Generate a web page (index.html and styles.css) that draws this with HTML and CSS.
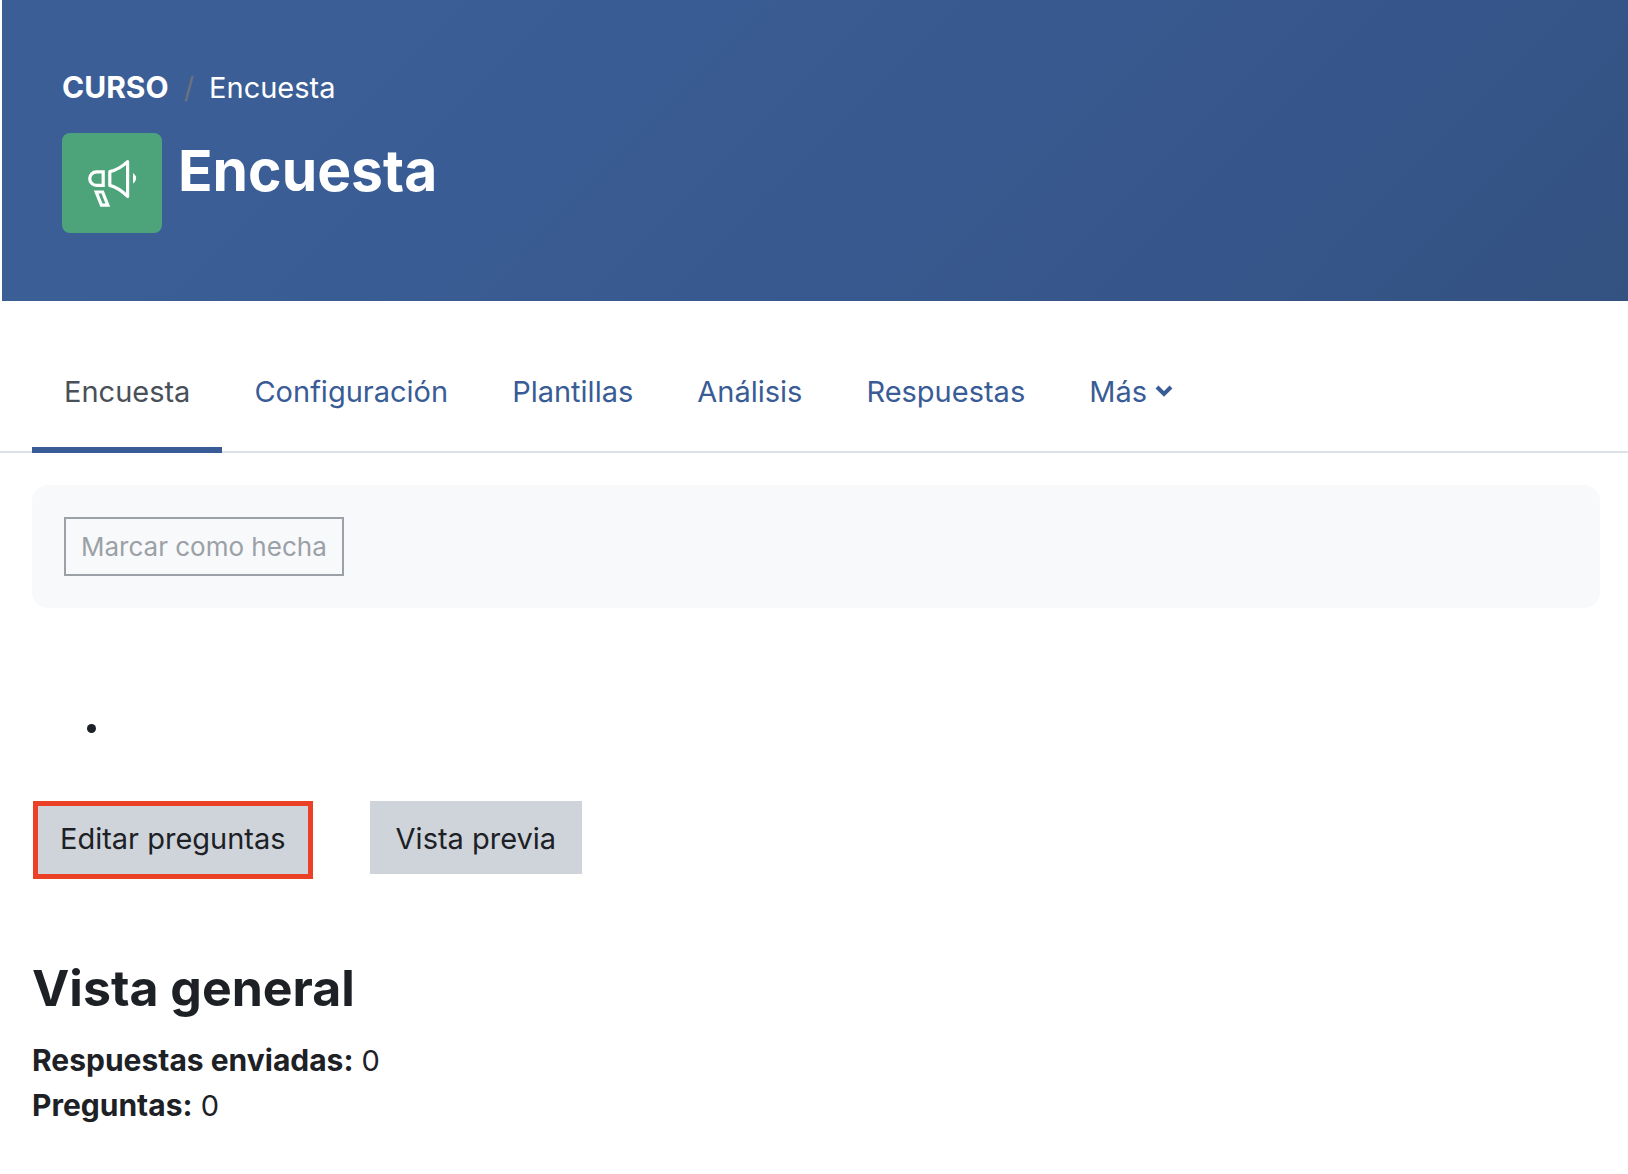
FILE: index.html
```html
<!DOCTYPE html>
<html lang="es">
<head>
<meta charset="utf-8">
<meta name="viewport" content="width=device-width, initial-scale=1">
<title>Encuesta</title>
<link rel="stylesheet" href="styles.css">
</head>
<body>
<header class="banner">
  <nav class="breadcrumb" aria-label="Ruta">
    <a class="crumb crumb-course" href="#">CURSO</a>
    <span class="crumb-divider">/</span>
    <a class="crumb" href="#">Encuesta</a>
  </nav>
  <div class="title-row">
    <span class="activity-icon">
      <svg viewBox="0 0 100 100" width="100" height="100" fill="none" stroke="#fff" stroke-width="3.200" aria-hidden="true">
        <path d="M41.200 38.800H34.500a6.800 6.800 0 0 0 0 13.600H41.200z"/>
        <path d="M47.800 38.600c7-1.600 12.500-5 17.800-10v34.800c-5.300-5-10.800-9.400-17.800-11z" stroke-linejoin="round"/>
        <path d="M34.200 59h6.400l5.200 13.200h-6.400z"/>
        <path d="M71 40q6.500 5.300 0 10.700z" fill="#fff" stroke="none"/>
      </svg>
    </span>
    <h1 class="title">Encuesta</h1>
  </div>
</header>

<nav class="tabs" aria-label="Encuesta">
  <a class="tab tab-active" href="#" aria-current="page">Encuesta</a>
  <a class="tab" href="#">Configuración</a>
  <a class="tab" href="#">Plantillas</a>
  <a class="tab" href="#">Análisis</a>
  <a class="tab" href="#">Respuestas</a>
  <a class="tab tab-more" href="#">Más
    <svg class="chevron" viewBox="0 0 18 14" width="18" height="14" fill="none" stroke="currentColor" stroke-width="4" aria-hidden="true"><path d="M2 3l7 7 7-7"/></svg>
  </a>
</nav>

<main class="content">
  <section class="completion">
    <button class="mark-done" type="button">Marcar como hecha</button>
  </section>
  <ul class="intro"><li></li></ul>
  <div class="actions">
    <button class="action action-marked" type="button">Editar preguntas</button>
    <button class="action" type="button">Vista previa</button>
  </div>
  <section>
    <h2 class="overview-title">Vista general</h2>
    <p class="stat"><strong>Respuestas enviadas:</strong> 0</p>
    <p class="stat"><strong>Preguntas:</strong> 0</p>
  </section>
</main>
</body>
</html>
```
FILE: styles.css
```css
* {
  box-sizing: border-box;
}

body {
  margin: 0;
  background: #fff;
  color: #1d2125;
  font: 29px/45px Inter, "Liberation Sans", sans-serif;
}

button {
  font: inherit;
  margin: 0;
}

a {
  color: inherit;
  text-decoration: none;
}

.banner {
  margin-left: 2px;
  padding: 65px 60px 68px;
  background: linear-gradient(135deg, #3b5e97 20%, #36568b 75%, #335281 100%);
  color: #fff;
}

.breadcrumb {
  display: flex;
  gap: 15px;
}

.crumb-course {
  font-size: 30px;
  font-weight: 700;
}

.crumb-divider {
  color: #6a737b;
}

.title-row {
  display: flex;
  gap: 16px;
  margin-top: 23px;
}

.activity-icon {
  width: 100px;
  height: 100px;
  border-radius: 8px;
  background: #4da47a;
}

.activity-icon svg {
  display: block;
}

.title {
  margin: 0;
  font-size: 57px;
  font-weight: 700;
  line-height: 76px;
}

.tabs {
  display: flex;
  padding: 32px 32px 0;
  border-bottom: 2px solid #dee2e6;
}

.tab {
  display: flex;
  align-items: center;
  height: 120px;
  margin-bottom: -2px;
  padding: 2px 32px 0;
  border-bottom: 6px solid transparent;
  color: #395c96;
}

.tab-active {
  border-color: #395c96;
  color: #495057;
}

.tab-more {
  gap: 8px;
}

.content {
  padding: 32px 28px 32px 32px;
}

.completion {
  padding: 32px;
  border-radius: 16px;
  background: #f8f9fb;
}

.mark-done {
  display: block;
  height: 59px;
  padding: 0 15px;
  border: 2px solid #9ba1a6;
  background: transparent;
  color: #9ba1a6;
  font-size: 26px;
}

.intro {
  margin: 96px 0 52px;
  padding-left: 80px;
}

.actions {
  display: flex;
  align-items: flex-start;
  gap: 57px;
  padding-left: 1px;
}

.action {
  height: 73px;
  padding: 1px 26px 0;
  border: 0;
  background: #ced4da;
  color: #1d2125;
}

.action-marked {
  height: 78px;
  padding: 0 22px 4px;
  border: 5px solid #eb4025;
}

.overview-title {
  margin: 79px 0 20px;
  font-size: 50px;
  font-weight: 700;
  line-height: 60px;
}

.stat {
  margin: 0;
}

.stat strong {
  font-size: 30px;
  font-weight: 700;
}
```
